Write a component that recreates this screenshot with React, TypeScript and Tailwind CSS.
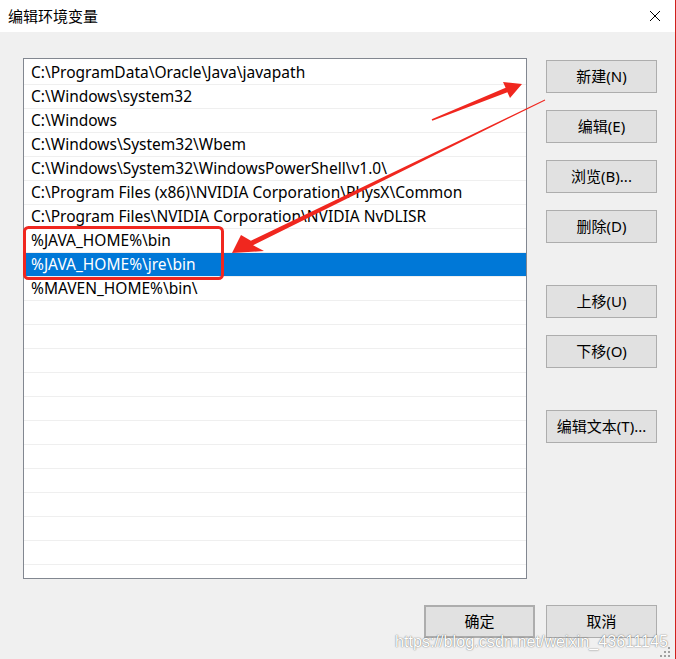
import React from 'react';

const paths = [
  'C:\\ProgramData\\Oracle\\Java\\javapath',
  'C:\\Windows\\system32',
  'C:\\Windows',
  'C:\\Windows\\System32\\Wbem',
  'C:\\Windows\\System32\\WindowsPowerShell\\v1.0\\',
  'C:\\Program Files (x86)\\NVIDIA Corporation\\PhysX\\Common',
  'C:\\Program Files\\NVIDIA Corporation\\NVIDIA NvDLISR',
  '%JAVA_HOME%\\bin',
  '%JAVA_HOME%\\jre\\bin',
  '%MAVEN_HOME%\\bin\\',
];

const rows = [...paths, ...Array(12).fill('')];

function WinButton({ label, className = '' }: { label: string; className?: string }) {
  return (
    <button
      className={`w-[111px] h-[33px] bg-[#e1e1e1] border border-[#adadad] text-[15px] text-black flex items-center justify-center ${className}`}
    >
      {label}
    </button>
  );
}

export default function App() {
  return (
    <div className="relative w-[676px] h-[659px] bg-[#f0f0f0] border-r border-[#d0211c] flex flex-col overflow-hidden font-['Noto_Sans','Noto_Sans_CJK_SC',sans-serif]">
      {/* title bar */}
      <div className="h-[32px] bg-white flex items-center justify-between pl-[8px] pr-[14px]">
        <span className="text-[15px] text-black leading-none">编辑环境变量</span>
        <svg width="12" height="12" viewBox="0 0 12 12">
          <path d="M1 1L11 11M11 1L1 11" stroke="#000" strokeWidth="1" />
        </svg>
      </div>

      {/* content */}
      <div className="flex pl-[23px] pr-[18px]">
        <div className="mt-[26px] w-[504px] h-[521px] border border-[#828790] bg-white pt-[2px] overflow-hidden">
          {rows.map((p, i) => (
            <div
              key={i}
              className={`h-[24px] border-b border-[#efefef] pl-[7px] flex items-center text-[15.5px] whitespace-nowrap ${
                i === 8 ? 'bg-[#0078d7] text-white' : 'text-black'
              }`}
            >
              {p}
            </div>
          ))}
        </div>

        <div className="ml-[19px] mt-[28px] flex flex-col">
          <WinButton label="新建(N)" />
          <WinButton label="编辑(E)" className="mt-[17px]" />
          <WinButton label="浏览(B)..." className="mt-[17px]" />
          <WinButton label="删除(D)" className="mt-[17px]" />
          <WinButton label="上移(U)" className="mt-[42px]" />
          <WinButton label="下移(O)" className="mt-[17px]" />
          <WinButton label="编辑文本(T)..." className="mt-[42px]" />
        </div>
      </div>

      {/* footer */}
      <div className="flex justify-end gap-[11px] pr-[18px] mt-[26px]">
        <WinButton label="确定" className="border-2 border-[#0078d7]" />
        <WinButton label="取消" />
      </div>

      {/* annotations */}
      <svg className="absolute left-0 top-0 pointer-events-none" width="676" height="659">
        <rect x="24.5" y="227.5" width="198" height="51" rx="4" fill="none" stroke="#f0271f" strokeWidth="3" />
        <polygon
          fill="#f0271f"
          points="431.7,119.3 505.6,87.7 503,82 522,84 510,98 507.4,92.3 432.3,120.7"
        />
        <polygon
          fill="#f0271f"
          points="544.8,99.6 250.9,240.8 241,235 232,253 264,251 253.1,245.2 545.2,100.4"
        />
      </svg>

      {/* watermark */}
      <span className="absolute left-[395px] top-[629px] text-[16.2px] text-white font-['Liberation_Sans',sans-serif] [text-shadow:0_0_1px_rgba(0,0,0,0.55),0_0_2px_rgba(0,0,0,0.25)] pointer-events-none whitespace-nowrap">
        https://blog.csdn.net/weixin_43611145
      </span>

      {/* size grip */}
      <svg className="absolute right-[3px] bottom-0" width="12" height="12" viewBox="0 0 12 12">
        <g fill="#a0a0a0">
          <rect x="8" y="0" width="2" height="2" />
          <rect x="4" y="4" width="2" height="2" />
          <rect x="8" y="4" width="2" height="2" />
          <rect x="0" y="8" width="2" height="2" />
          <rect x="4" y="8" width="2" height="2" />
          <rect x="8" y="8" width="2" height="2" />
        </g>
      </svg>
    </div>
  );
}
